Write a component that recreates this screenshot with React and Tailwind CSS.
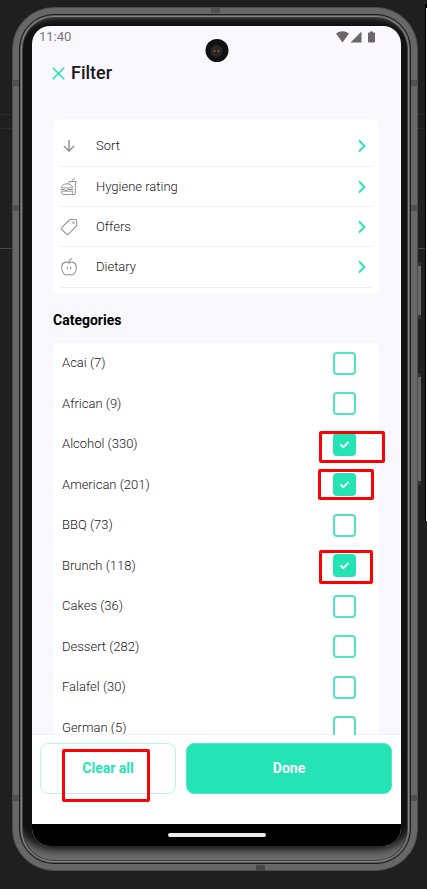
import React from "react";

const options = [
  { label: "Sort", icon: ArrowIcon },
  { label: "Hygiene rating", icon: BurgerIcon },
  { label: "Offers", icon: TagIcon },
  { label: "Dietary", icon: AppleIcon },
];

const categories = [
  { name: "Acai", count: 7 },
  { name: "African", count: 9 },
  { name: "Alcohol", count: 330, checked: true, mark: "-left-[14px] -top-[2px] w-[66px] h-8" },
  { name: "American", count: 201, checked: true, mark: "-left-[15px] -top-1 w-14 h-[31px]" },
  { name: "BBQ", count: 73 },
  { name: "Brunch", count: 118, checked: true, mark: "-left-[14px] -top-1 w-[54px] h-[34px]" },
  { name: "Cakes", count: 36 },
  { name: "Dessert", count: 282 },
  { name: "Falafel", count: 30 },
  { name: "German", count: 5 },
];

function ArrowIcon() {
  return (
    <svg width="18" height="18" viewBox="0 0 18 18" fill="none" stroke="#97959c" strokeWidth="1.6">
      <path d="M9 3v11M4 9l5 5 5-5" />
    </svg>
  );
}

function BurgerIcon() {
  return (
    <svg width="18" height="18" viewBox="0 0 18 18" fill="none" stroke="#97959c" strokeWidth="1" strokeLinejoin="round" strokeLinecap="round">
      <path d="M1.5 9.5C1.5 7 4 5.8 7 5.8s5.5 1.2 5.5 3.7zM1 11.5h3l2 1 2-1h5M1.5 13.2h11v1.3q0 2-2 2h-7q-2 0-2-2zM9 5V3.5h7.500M15.800 3.500l-.8 13h-3M12 3.200l.8-1.700 2-.8" />
    </svg>
  );
}

function TagIcon() {
  return (
    <svg width="18" height="18" viewBox="0 0 18 18" fill="none" stroke="#97959c" strokeWidth="1.1" strokeLinejoin="round">
      <path d="M10.500 1.500h4.700q1.500 0 1.500 1.500v4q0 .8-.6 1.400l-7.700 7.800q-.9.900-1.800 0L1.700 11.500q-.9-.9 0-1.800L9.300 2q.5-.5 1.200-.5z" />
      <circle cx="13.5" cy="4.700" r=".6" />
    </svg>
  );
}

function AppleIcon() {
  return (
    <svg width="18" height="18" viewBox="0 0 18 18" fill="none" stroke="#97959c" strokeWidth="1.1" strokeLinecap="round">
      <path d="M9 5C7 3.500 2 3.500 1.700 9c-.2 4 2 8 4.600 8 1.200 0 1.700-.6 2.700-.6s1.500.6 2.700.6c2.600 0 4.800-4 4.600-8C16 3.500 11 3.500 9 5zM9 4.500C9 3 9.800 1.500 11.500.8M7.300 9v2M10.700 9v2" />
    </svg>
  );
}

function StatusBar() {
  return (
    <div className="flex h-[22px] shrink-0 items-center justify-between pl-[7px] pr-[25px] text-[13px] font-normal text-[#77757b]">
      <span className="leading-5">11:40</span>
      <svg width="40" height="12" viewBox="0 0 40 12" fill="#69676b">
        <path d="M0 2.500Q6.500-2 13 2.500L6.500 11.500zM25.500.5v11h-11zM32 2.500q0-1 1-1h1V.5h3v1h1q1 0 1 1v8q0 1-1 1h-5q-1 0-1-1z" />
      </svg>
    </div>
  );
}

function OptionRow({ label, icon: Icon }) {
  return (
    <li className="h-10 border-b border-[#f0eff3] first:h-[41px] last:h-[41px]">
      <button type="button" className="flex h-full w-full items-center text-left text-[13px]">
        <span className="w-9 shrink-0">
          <Icon />
        </span>
        <span className="flex-1">{label}</span>
        <svg className="mr-[5px]" width="10" height="14" viewBox="0 0 10 14" fill="none" stroke="#24e4b6" strokeWidth="1.9">
          <path d="M2 1.500L7.500 7 2 12.500" />
        </svg>
      </button>
    </li>
  );
}

function CategoryRow({ name, count, checked, mark }) {
  return (
    <li className="flex h-10 items-center pl-[9px] pr-[23px] even:h-[41px]">
      <label className="flex w-full items-center justify-between text-[13px]">
        <span>
          {name} ({count})
        </span>
        <span className="relative block h-[23px] w-[23px]">
          <input
            type="checkbox"
            defaultChecked={checked}
            className="peer block h-[23px] w-[23px] appearance-none rounded-[4px] border-2 border-[#4fe5c2] bg-white checked:border-[#24e4b6] checked:bg-[#24e4b6]"
          />
          <svg className="pointer-events-none absolute inset-0 hidden peer-checked:block" width="23" height="23" viewBox="0 0 23 23" fill="none" stroke="#fff" strokeWidth="1.8">
            <path d="M7.500 11.500l2.800 2.700L15.500 9" />
          </svg>
          {mark && <span className={`pointer-events-none absolute rounded-[2px] border-[3px] border-[#fd0204] ${mark}`} />}
        </span>
      </label>
    </li>
  );
}

export default function App() {
  return (
    <main className="relative flex h-screen flex-col overflow-hidden bg-[#1f1f1f] pt-[7px] pr-[9px] pb-[18px] pl-3 font-['Roboto',sans-serif] font-[350] text-[#19181b]">
      <div className="absolute inset-x-0 top-[114px] h-[15px] border-y border-[#2b2b2b]" />
      <div className="absolute inset-x-0 top-[248px] border-t border-[#4a4a4a]" />
      <div className="absolute top-1 right-0 h-[517px] w-[2px] border-t-4 border-l border-black bg-white" />
      <div className="absolute top-[262px] right-[6px] h-[57px] w-[3px] border-y-4 border-[#333] bg-[#686868]" />
      <div className="absolute top-[373px] right-[6px] h-[112px] w-[3px] border-y-4 border-[#333] bg-[#686868]" />

      <div className="relative flex min-h-0 flex-1 flex-col rounded-[42px] border border-[#4c4c4c] bg-[#676767] p-[6px]">
        <div className="absolute top-[72px] -inset-x-px h-[6px] bg-[#505050]" />
        <div className="absolute top-[197px] -inset-x-px h-[6px] bg-[#505050]" />
        <div className="absolute bottom-[69px] -inset-x-px h-[6px] bg-[#505050]" />
        <div className="absolute -top-px left-[198px] h-[6px] w-[9px] bg-[#505050]" />
        <div className="absolute right-[152px] -bottom-px h-[6px] w-[9px] bg-[#484848]" />
        <div className="relative flex min-h-0 flex-1 flex-col rounded-[35px] border border-[#1c1c1c] bg-[#121212] pt-[11px] pr-[9px] pb-[17px] pl-3 shadow-[inset_0_0_0_1px_#5c5c5c,inset_0_0_0_2px_#858585,inset_0_0_0_3px_#3c3c3c,inset_0_-22px_9px_-9px_#6d6d6d,inset_0_12px_6px_-9px_#555]">
          <div className="relative flex min-h-0 flex-1 flex-col overflow-hidden rounded-[18px] bg-[#faf8ff]">
            <StatusBar />
            <div className="absolute top-[13px] left-1/2 flex h-[23px] w-[23px] -translate-x-1/2 items-center justify-center rounded-full bg-[#111]">
              <div className="flex h-3 w-3 items-center justify-center gap-[2px] rounded-full bg-[#292623]">
                <i className="h-[2px] w-[2px] rounded-full bg-[#77723b]" />
                <i className="h-[2px] w-[2px] rounded-full bg-[#9a5942]" />
              </div>
            </div>

            <header className="flex h-[50px] shrink-0 items-center gap-[6px] pl-5">
              <button type="button" aria-label="Close">
                <svg width="13" height="13" viewBox="0 0 13 13" fill="none" stroke="#24e4b6" strokeWidth="1.6">
                  <path d="M.8.8l11.400 11.400M12.200.8L.8 12.200" />
                </svg>
              </button>
              <h1 className="text-[18px] leading-6 font-medium">Filter</h1>
            </header>

            <div className="min-h-0 flex-1 overflow-hidden pt-[21px] pr-[22px] pl-[21px]">
              <ul className="rounded-lg bg-white px-[7px] pt-[7px] pb-[7px]">
                {options.map((option) => (
                  <OptionRow key={option.label} {...option} />
                ))}
              </ul>
              <h2 className="pt-[13px] pb-[11px] text-[14px] leading-6 font-bold text-black">Categories</h2>
              <ul className="bg-white">
                {categories.map((category) => (
                  <CategoryRow key={category.name} {...category} />
                ))}
              </ul>
            </div>

            <footer className="flex h-[89px] shrink-0 gap-[10px] bg-white pt-2 pr-[9px] pb-[30px] pl-2 shadow-[0_-1px_1px_#f4f1f7]">
              <button type="button" className="relative w-[136px] rounded-lg border border-[#b9f3e5] text-[14px] font-bold text-[#24e4b6]">
                Clear all
                <span className="pointer-events-none absolute top-[5px] left-[21px] h-[53px] w-[88px] rounded-[2px] border-[3px] border-[#fd0204]" />
              </button>
              <button type="button" className="flex-1 rounded-lg border border-[#55e9c5] bg-[#24e4b6] text-[14px] font-bold text-white">
                Done
              </button>
            </footer>
            <div className="flex h-[22px] shrink-0 items-center justify-center bg-black">
              <div className="h-1 w-[98px] rounded-full bg-[#ececec]" />
            </div>
          </div>
        </div>
      </div>
    </main>
  );
}
